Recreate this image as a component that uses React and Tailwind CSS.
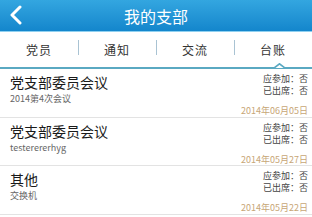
import React from "react";

const rows = [
  { title: "党支部委员会议", sub: "2014第4次会议", date: "2014年06月05日" },
  { title: "党支部委员会议", sub: "testerererhyg", date: "2014年05月27日" },
  { title: "其他", sub: "交换机", date: "2014年05月22日" },
];

const tabs = ["党员", "通知", "交流", "台账"];

export default function App() {
  return (
    <div
      className="w-[312px] h-[217px] overflow-hidden bg-white"
      style={{ fontFamily: '"Noto Sans CJK SC", "Noto Sans", sans-serif' }}
    >
      <div className="relative h-[32px] bg-linear-to-b from-[#33a6e0] to-[#1386cc] border-b border-[#8fd0f0] flex items-center justify-center">
        <svg className="absolute left-[9px] top-[5px]" width="14" height="20" viewBox="0 0 14 20">
          <path d="M11 2 L3 10 L11 18" fill="none" stroke="#fff" strokeWidth="3" strokeLinecap="round" strokeLinejoin="round" />
        </svg>
        <span className="text-white text-[16px] leading-none">我的支部</span>
      </div>
      <div className="relative h-[37px] flex items-center border-b-2 border-[#5aa9c2]">
        {tabs.map((t, i) => (
          <div key={t} className="flex-1 relative flex items-center justify-center h-full">
            {i > 0 && <div className="absolute left-0 top-[8px] w-px h-[15px] bg-[#a9c3d3]" />}
            <span className="text-[12px] text-[#333] tracking-[1px]">{t}</span>
          </div>
        ))}
        <svg className="absolute left-[274px] bottom-[-2px]" width="11" height="6" viewBox="0 0 11 6">
          <path d="M0 5 L5.5 0.8 L11 5" fill="#fff" stroke="#5aa9c2" strokeWidth="1.6" />
        </svg>
      </div>
      {rows.map((r, i) => (
        <div key={i} className="h-[48.5px] border-b border-[#e3e3e3] flex justify-between pl-[10px] pr-[4px]">
          <div className="pt-[5px]">
            <div className="text-[14px] leading-[16px] text-[#1a1a1a]">{r.title}</div>
            <div className="text-[9px] leading-[11px] mt-[3px] text-[#666]">{r.sub}</div>
          </div>
          <div className="flex flex-col items-end pt-[4px]">
            <div className="text-[9px] leading-[12px] text-[#444]">应参加：否</div>
            <div className="text-[9px] leading-[12px] text-[#444]">已出席：否</div>
            <div className="text-[9px] leading-[10px] mt-[9px] text-[#c7a676]">{r.date}</div>
          </div>
        </div>
      ))}
    </div>
  );
}
